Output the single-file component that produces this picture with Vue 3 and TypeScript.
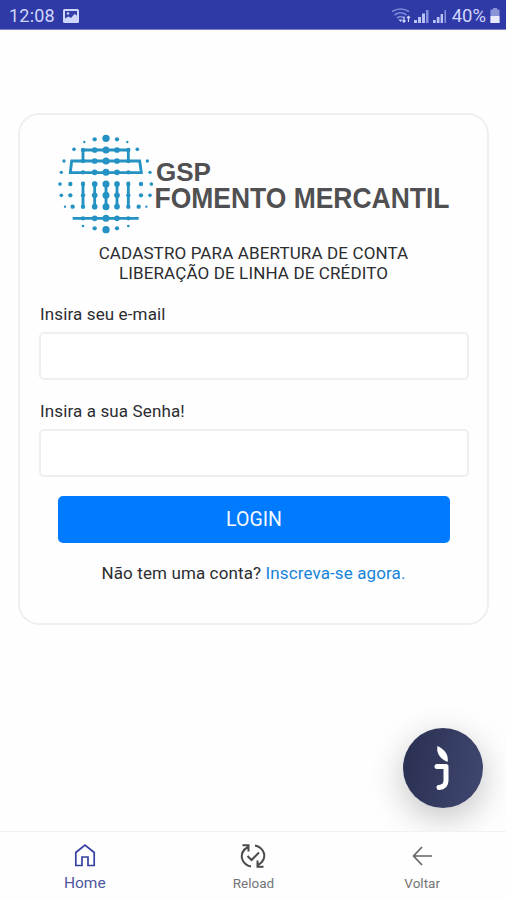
<script setup lang="ts">
import { ref } from 'vue'

type Dot = [number, number, number]

const email = ref('')
const password = ref('')

const cols = [99, 134, 168, 201, 235]
const sizes = [6.5, 8.5, 10.5, 8.5, 6.5]
const rows = [75, 108, 142, 177, 211, 245, 280]
const grid: Dot[] = rows.flatMap((y) => cols.map((x, i): Dot => [x, y, sizes[i]]))
const outer: Dot[] = [
  [168, 40, 11], [134, 43, 6.5], [201, 43, 6.5], [103, 51, 3.5], [232, 51, 3.5],
  [72, 73, 5.5], [262, 73, 5.5], [42, 108, 5], [292, 108, 5],
  [34, 142, 5], [300, 142, 5], [30, 177, 5.5], [61, 177, 6.5], [273, 177, 6.5], [304, 177, 5.5],
  [34, 211, 5.5], [61, 211, 6.5], [273, 211, 6.5], [300, 211, 5.5],
  [45, 245, 3.5], [68, 245, 6.5], [266, 245, 6.5], [289, 245, 3.5],
  [168, 314, 11], [134, 310, 6.5], [201, 310, 6.5], [99, 303, 4], [235, 303, 4],
]
const dots = [...grid, ...outer]
</script>

<template>
  <div class="screen">
    <header class="status">
      <span class="clock">12:08</span>
      <svg class="photo" width="16" height="14" viewBox="0 0 16 14">
        <rect x="0" y="0" width="16" height="14" rx="1.500" fill="#cfd6fb" />
        <path d="M2 2h12v4.500l-2.500-1.500-3.500 4-2.500-1.500L2 9.500z" fill="#3540a8" />
        <circle cx="5" cy="4.500" r="1.200" fill="#cfd6fb" />
      </svg>
      <svg class="signals" width="58" height="18" viewBox="0 0 58 18">
        <g fill="none" stroke="#7f8ada" stroke-width="1.700">
          <path d="M1 4.500q8.500-5 17 0M3.500 8q6-4.500 12 0M6 11q3.500-2.800 7 0" />
        </g>
        <path d="M7.500 12.500h4l-2 2.500z" fill="#c5cdf8" />
        <path d="M13 9.500v5.500m-1.500-1.500 1.500 1.700 1.500-1.700M17.500 15V9.500m-1.500 1.500 1.500-1.700 1.500 1.700" fill="none" stroke="#d0d7fb" stroke-width="1.200" />
        <g fill="#b9c2f5">
          <path d="M23 13h3v3h-3zM27 10h3v6h-3zM31 6.500h3v9.500h-3z" />
          <path d="M42 13h2.700v3H42zM45.800 10h2.700v6h-2.700zM49.600 7h2.400v9h-2.400z" />
        </g>
        <path d="M35 3h2.500v13H35zM53.500 3h1.500v13h-1.500z" fill="#8792dc" />
      </svg>
      <span class="percent">40%</span>
      <svg class="battery" width="10" height="15" viewBox="0 0 10 15">
        <path d="M3 0h4v1.500h2.500V15H.5V1.500H3z" fill="#8993d8" />
        <path d="M.5 8h9v7h-9z" fill="#e7eaff" />
      </svg>
    </header>

    <main class="content">
      <form class="card" @submit.prevent>
        <svg class="logo" width="400" height="100" viewBox="0 0 400 100">
          <g transform="translate(-6 -9) scale(.33333)">
            <g fill="none" stroke="#2492c2" stroke-width="8.500">
              <path d="M99 108V75H235V108M65 108H269L274 143H61ZM68 280H266" />
              <path v-for="x in cols" :key="x" :d="`M${x} 170V250`" />
            </g>
            <circle v-for="(d, i) in dots" :key="i" :cx="d[0]" :cy="d[1]" :r="d[2]" fill="#2492c2" />
          </g>
          <g class="brand">
            <text x="100" y="47" font-size="26" textLength="55" lengthAdjust="spacingAndGlyphs">GSP</text>
            <text x="98.500" y="73.500" font-size="30" textLength="295" lengthAdjust="spacingAndGlyphs">FOMENTO MERCANTIL</text>
          </g>
        </svg>
        <p class="intro">CADASTRO PARA ABERTURA DE CONTA<br />LIBERAÇÃO DE LINHA DE CRÉDITO</p>
        <label class="label" for="email">Insira seu e-mail</label>
        <input id="email" v-model="email" class="field" type="email" />
        <label class="label" for="password">Insira a sua Senha!</label>
        <input id="password" v-model="password" class="field" type="password" />
        <button class="login" type="submit">LOGIN</button>
        <p class="signup">Não tem uma conta? <a class="link">Inscreva-se agora.</a></p>
      </form>
      <button class="fab" type="button">
        <svg width="80" height="80" viewBox="0 0 80 80">
          <path d="M34.500 18q-2 10.500 10 16q2-10-10-16z" fill="#fff" />
          <path d="M34 38.500H43V52.500Q43 59 36 59.500" fill="none" stroke="#fff" stroke-width="5" stroke-linejoin="round" stroke-linecap="round" />
        </svg>
      </button>
    </main>

    <nav class="tabs">
      <a class="tab active">
        <svg width="24" height="26" viewBox="0 0 24 26">
          <path d="M2.800 22.500V9.500L12 2l9.200 7.500v13h-6.200v-8.500H9v8.500z" fill="none" stroke="#3540a0" stroke-width="1.700" />
        </svg>
        <span>Home</span>
      </a>
      <a class="tab">
        <svg width="28" height="26" viewBox="0 0 28 26">
          <g fill="none" stroke="#4b4b4b" stroke-width="2">
            <path d="M12 23.500C5 22 1 15.500 3.500 9.500Q5 6 9 4M3.500 2.200H9.500V8.500" />
            <path d="M16 2.500C23 4 27 10.500 24.500 16.500Q23 20 19 22M24.500 23.800H18.500V17.500" />
            <path d="M8.500 13l4 4 7.500-7.500" />
          </g>
        </svg>
        <span>Reload</span>
      </a>
      <a class="tab">
        <svg width="24" height="26" viewBox="0 0 24 26">
          <path d="M22 13H3.500M12 4 3.500 13l8.500 9" fill="none" stroke="#666" stroke-width="1.700" />
        </svg>
        <span>Voltar</span>
      </a>
    </nav>
  </div>
</template>

<style>
body {
  background: #fff;
}
</style>

<style scoped>
.screen {
  box-sizing: border-box;
  width: 506px;
  height: 900px;
  display: flex;
  flex-direction: column;
  overflow: hidden;
  background: #fefefe;
  color: #2b2d30;
  font-family: Roboto, "Liberation Sans", sans-serif;
}
.status {
  box-sizing: border-box;
  height: 30px;
  flex: none;
  display: flex;
  align-items: center;
  padding: 2px 6px 0 9px;
  background: #303aa6;
  border-bottom: 1px solid #7c82c4;
  color: #cfd6fb;
  font-size: 18px;
}
.clock {
  letter-spacing: 0.2px;
}
.photo {
  margin-left: 8px;
}
.signals {
  margin-left: auto;
}
.percent {
  margin: 0 4px 0 3px;
  font-size: 18.500px;
}
.content {
  position: relative;
  flex: 1;
  padding: 83px 17px 0 18px;
}
.card {
  box-sizing: border-box;
  height: 512px;
  display: flex;
  flex-direction: column;
  padding: 19px 19px 0 19px;
  border: 2px solid #efeff0;
  border-radius: 21px;
}
.logo {
  flex: none;
  display: block;
  overflow: visible;
  margin-left: 17px;
}
.intro {
  margin: 9px 0 0;
  text-align: center;
  font-size: 17px;
  letter-spacing: 0.130px;
  line-height: 20px;
}
.brand {
  fill: #505052;
  font-family: "Liberation Sans", Arial, sans-serif;
  font-weight: 700;
}
.label {
  margin: 21px 0 0 1px;
  font-size: 17px;
  letter-spacing: 0.130px;
  line-height: 20px;
}
.field {
  box-sizing: border-box;
  width: 430px;
  height: 48px;
  margin: 8px 0 0;
  padding: 0 12px;
  border: 2px solid #eeeff0;
  border-radius: 5px;
  background: #fff;
  outline: none;
}
.login {
  height: 47px;
  margin: 19px 18px 0 19px;
  padding: 0;
  border: 0;
  border-radius: 5px;
  background: #007bff;
  color: #f3f9ff;
  font: 400 19.500px Roboto, sans-serif;
}
.signup {
  margin: 20px 0 0;
  text-align: center;
  font-size: 17px;
  letter-spacing: 0.120px;
  line-height: 20px;
}
.link {
  color: #1683d8;
}
.fab {
  position: absolute;
  right: 23px;
  bottom: 23px;
  width: 80px;
  height: 80px;
  padding: 0;
  border: 0;
  border-radius: 50%;
  background: linear-gradient(100deg, #292f50, #414871);
  box-shadow: 0 10px 34px rgba(0, 0, 0, 0.24);
}
.tabs {
  box-sizing: border-box;
  position: relative;
  height: 69px;
  flex: none;
  display: grid;
  grid-template-columns: repeat(3, 1fr);
  border-top: 1px solid #f1f1f2;
  background: #fefefe;
}
.tab {
  display: flex;
  flex-direction: column;
  align-items: center;
  gap: 5px;
  padding: 11px 0 0 1px;
  color: #747477;
  font-size: 13.500px;
  line-height: 18px;
}
.active {
  color: #4e569f;
  font-size: 15.500px;
}
</style>
